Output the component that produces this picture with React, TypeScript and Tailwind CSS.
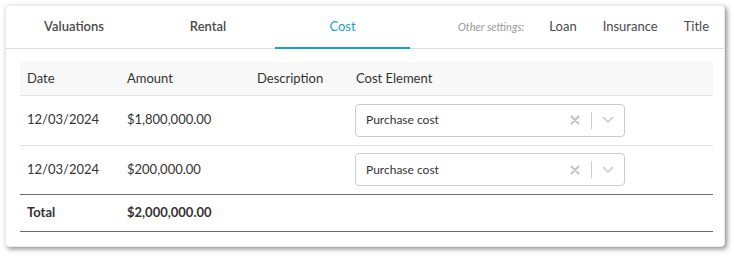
import React from 'react';

const rows = [
  { date: '12/03/2024', amount: '$1,800,000.00', description: '', element: 'Purchase cost' },
  { date: '12/03/2024', amount: '$200,000.00', description: '', element: 'Purchase cost' },
];

function CostSelect({ value }: { value: string }) {
  return (
    <div className="flex items-center w-[270px] h-[33px] border border-[#cccccc] rounded-[4px] bg-white">
      <span className="flex-1 pl-[10px] text-[12px] text-[#333333]">{value}</span>
      <svg width="10" height="10" viewBox="0 0 10 10" className="mr-[11px]">
        <path d="M1.5 1.5 L8.5 8.5 M8.5 1.5 L1.5 8.5" stroke="#c4c4c4" strokeWidth="2" strokeLinecap="round" />
      </svg>
      <div className="w-px h-[17px] bg-[#d0d0d0]" />
      <svg width="12" height="8" viewBox="0 0 12 8" className="mx-[10px]">
        <path d="M1.5 1.5 L6 6 L10.5 1.5" stroke="#c8c8c8" strokeWidth="1.5" fill="none" strokeLinecap="round" />
      </svg>
    </div>
  );
}

export default function App() {
  return (
    <div className="w-[734px] h-[256px] bg-white pt-[5px] pl-[5px]" style={{ fontFamily: 'Lato, "Open Sans", sans-serif' }}>
      <div className="w-[720px] h-[242px] bg-white rounded-[4px] shadow-[2px_2px_5px_rgba(0,0,0,0.45)] border border-[#ececec]">
        <div className="flex items-stretch h-[43px] border-b border-[#dedede] pl-[1px]">
          <div className="w-[134px] flex items-center justify-center text-[13px] font-semibold text-[#4a4a4a]">Valuations</div>
          <div className="w-[134px] flex items-center justify-center text-[13px] font-semibold text-[#4a4a4a]">Rental</div>
          <div className="w-[135px] flex items-center justify-center text-[13px] text-[#1a9fd8] border-b-2 border-[#1a9fd8] -mb-px">Cost</div>
          <div className="flex-1 flex items-center justify-end pr-[15px] text-[13px] text-[#4a4a4a]">
            <span className="italic text-[11px] text-[#9a9a9a] mr-[25px]">Other settings:</span>
            <span className="mr-[26px]">Loan</span>
            <span className="mr-[26px]">Insurance</span>
            <span>Title</span>
          </div>
        </div>
        <div className="px-[14px] pt-[13px]">
          <table className="w-[693px] border-collapse text-[13px] text-[#333333]">
            <thead>
              <tr className="bg-[#f8f8f8] border-b border-[#e2e2e2] h-[33px]">
                <th className="w-[100px] pl-[7px] text-left font-normal">Date</th>
                <th className="w-[130px] pl-[7px] text-left font-normal">Amount</th>
                <th className="w-[99px] pl-[7px] text-left font-normal">Description</th>
                <th className="pl-[7px] text-left font-normal">Cost Element</th>
              </tr>
            </thead>
            <tbody>
              {rows.map((r, i) => (
                <tr key={i} className={i === rows.length - 1 ? 'h-[49px] border-b border-[#6b6b6b]' : 'h-[50px] border-b border-[#e2e2e2]'}>
                  <td className="pl-[7px]">{r.date}</td>
                  <td className="pl-[7px]">{r.amount}</td>
                  <td className="pl-[7px]">{r.description}</td>
                  <td className="pl-[6px]">
                    <CostSelect value={r.element} />
                  </td>
                </tr>
              ))}
              <tr className="h-[37px] border-b border-[#6b6b6b] font-bold">
                <td className="pl-[7px]">Total</td>
                <td className="pl-[7px]">$2,000,000.00</td>
                <td />
                <td />
              </tr>
            </tbody>
          </table>
        </div>
      </div>
    </div>
  );
}
